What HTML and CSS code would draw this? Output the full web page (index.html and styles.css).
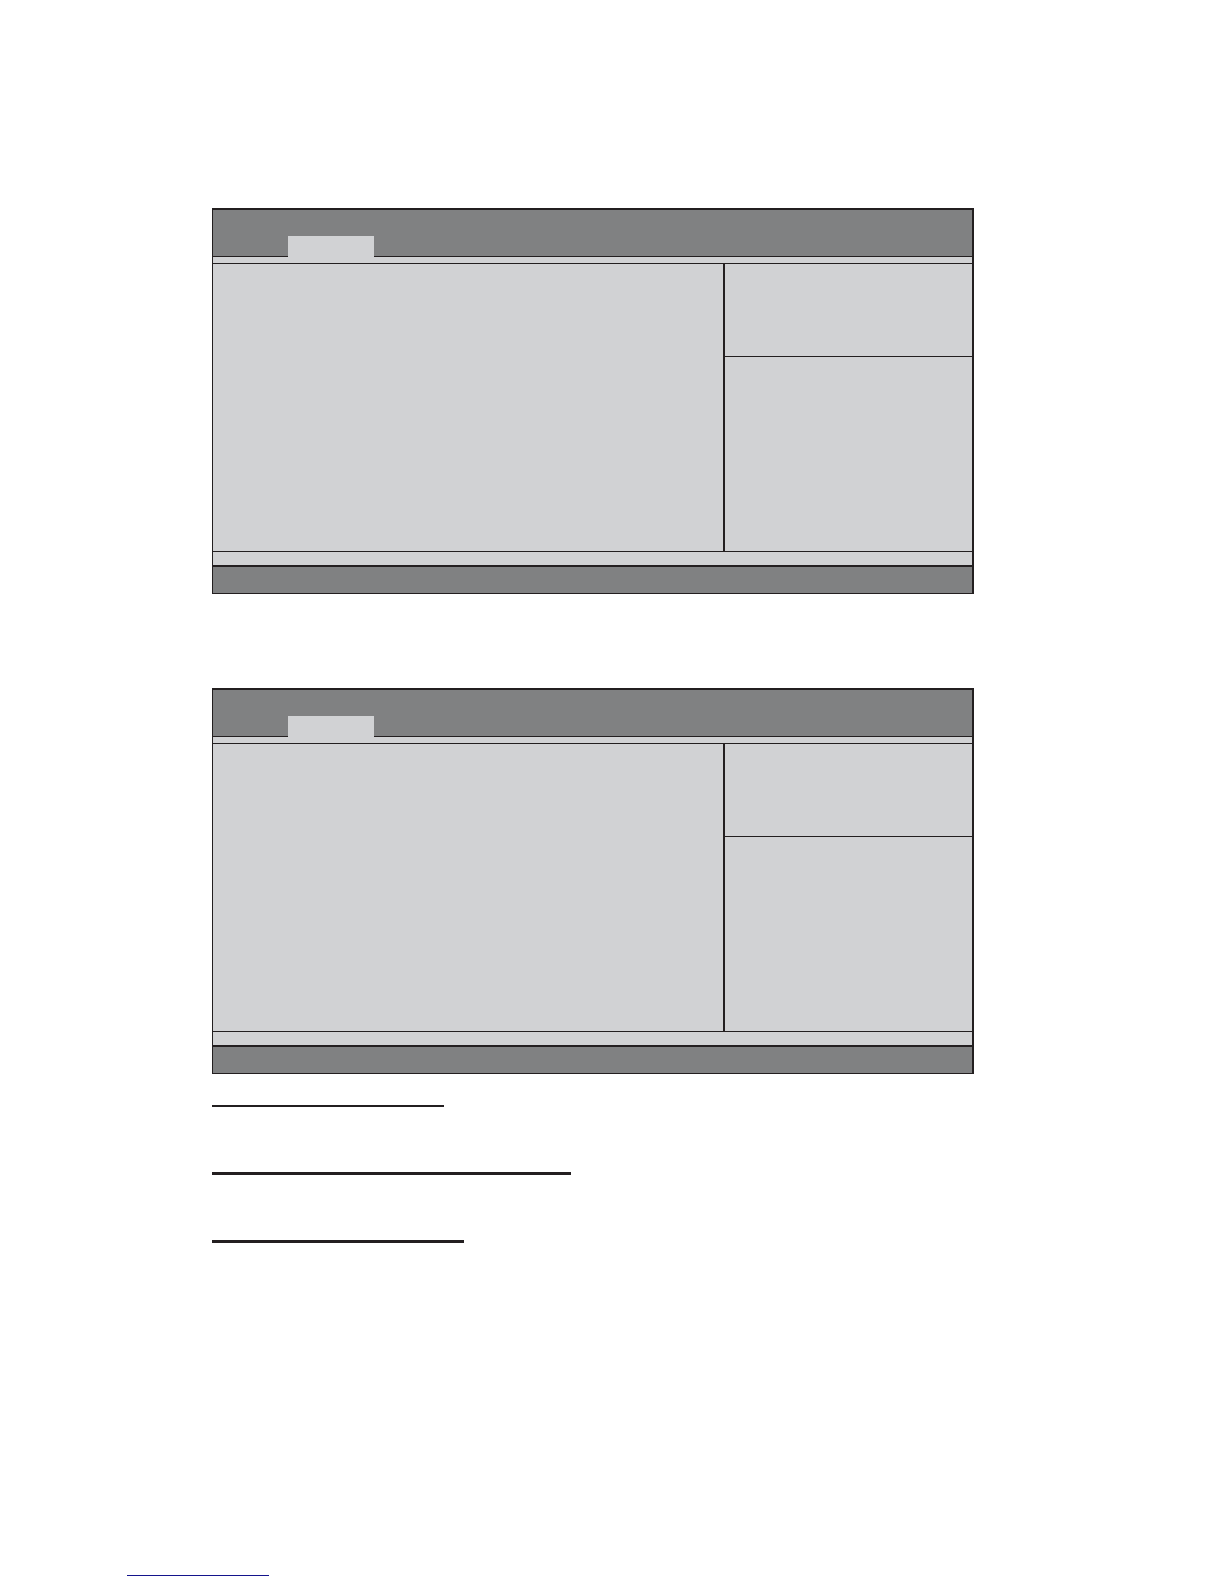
FILE: index.html
```
<!DOCTYPE html>
<html lang="en">
<head>
    <meta charset="UTF-8">
    <meta name="viewport" content="width=device-width, initial-scale=1.0">
    <link rel="stylesheet" href="styles.css">
</head>
<body>
    <main class="content">
        <section class="screen">
            <div class="menu-bar">
                <button type="button" class="tab"></button>
            </div>
            <div class="strip"></div>
            <div class="panes">
                <div class="settings"></div>
                <div class="side">
                    <div class="help"></div>
                    <div class="keys"></div>
                </div>
            </div>
            <div class="status"></div>
            <div class="version"></div>
        </section>

        <section class="screen">
            <div class="menu-bar">
                <button type="button" class="tab"></button>
            </div>
            <div class="strip"></div>
            <div class="panes">
                <div class="settings"></div>
                <div class="side">
                    <div class="help"></div>
                    <div class="keys"></div>
                </div>
            </div>
            <div class="status"></div>
            <div class="version"></div>
        </section>

        <div class="rules">
            <hr class="rule thin">
            <hr class="rule wide">
            <hr class="rule medium">
        </div>
    </main>
    <footer class="footer">
        <a class="footer-link" href="#"></a>
    </footer>
</body>
</html>
```

FILE: styles.css
```
:root {
    --line: #231f20;
    --bar: #808182;
    --panel: #d1d2d4;
    --link: #14148c;
}

* {
    box-sizing: border-box;
}

body {
    margin: 0;
    min-height: 100vh;
    display: flex;
    flex-direction: column;
    font-family: "Liberation Sans", Arial, sans-serif;
    background: white;
}

.content {
    padding: 208px 250px 0 212px;
}

.screen {
    background: var(--panel);
    border: 2px solid var(--line);
    border-left-width: 1px;
    border-bottom-width: 1px;
}

.screen + .screen {
    margin-top: 94px;
}

.menu-bar {
    display: flex;
    align-items: flex-end;
    height: 47px;
    padding-left: 75px;
    background: var(--bar);
    border-bottom: 1px solid var(--line);
}

/* the tab covers the line under the menu bar */
.tab {
    width: 86px;
    height: 21px;
    margin: 0 0 -1px;
    padding: 0;
    background: var(--panel);
    border: none;
    cursor: pointer;
}

.strip {
    height: 7px;
    border-bottom: 1px solid var(--line);
}

.panes {
    display: grid;
    grid-template-columns: 1fr 249px;
    min-height: 287px;
}

.side {
    display: flex;
    flex-direction: column;
    border-left: 2px solid var(--line);
}

.help {
    height: 93px;
    border-bottom: 1px solid var(--line);
}

.keys {
    flex: 1;
}

.status {
    height: 16px;
    border-top: 1px solid var(--line);
    border-bottom: 2px solid var(--line);
}

.version {
    height: 26px;
    background: var(--bar);
}

.rules {
    display: flex;
    flex-direction: column;
    gap: 65px;
    padding-top: 31px;
}

.rule {
    height: 3px;
    margin: 0;
    border: none;
    background: var(--line);
}

.rule.thin {
    width: 232px;
    height: 2px;
}

.rule.wide {
    width: 359px;
}

.rule.medium {
    width: 252px;
}

.footer {
    margin-top: auto;
    padding: 0 127px 8px;
}

.footer-link {
    display: block;
    width: 142px;
    border-bottom: 1px solid var(--link);
}
```
